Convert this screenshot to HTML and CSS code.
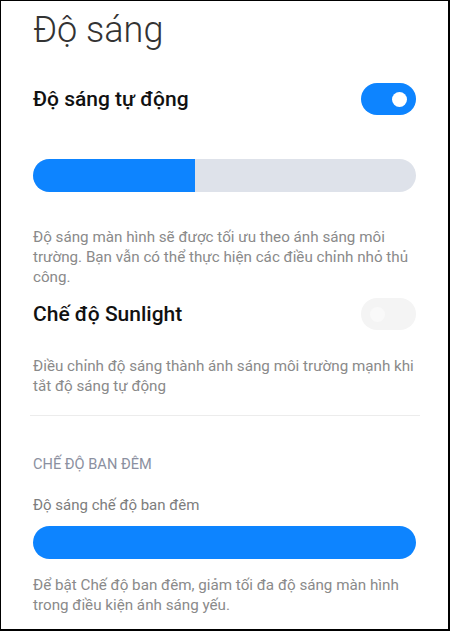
FILE: index.html
```html
<!DOCTYPE html>
<html lang="vi">
<head>
<meta charset="utf-8">
<link rel="stylesheet" href="styles.css">
</head>
<body>
<div class="frame">
  <h1 class="title">Độ sáng</h1>

  <div class="row row-auto">
    <span class="row-label">Độ sáng tự động</span>
    <span class="toggle on"><span class="knob"></span></span>
  </div>

  <div class="slider slider-auto"><div class="fill" style="width:42.3%"></div></div>

  <p class="desc desc-auto">Độ sáng màn hình sẽ được tối ưu theo ánh sáng môi trường. Bạn vẫn có thể thực hiện các điều chỉnh nhỏ thủ công.</p>

  <div class="row row-sun">
    <span class="row-label">Chế độ Sunlight</span>
    <span class="toggle off"><span class="knob"></span></span>
  </div>

  <p class="desc desc-sun">Điều chỉnh độ sáng thành ánh sáng môi trường mạnh khi tắt độ sáng tự động</p>

  <div class="divider"></div>

  <div class="section">CHẾ ĐỘ BAN ĐÊM</div>

  <div class="sub">Độ sáng chế độ ban đêm</div>

  <div class="slider slider-night"><div class="fill" style="width:100%"></div></div>

  <p class="desc desc-night">Để bật Chế độ ban đêm, giảm tối đa độ sáng màn hình trong điều kiện ánh sáng yếu.</p>
</div>
</body>
</html>
```

FILE: styles.css
```css
* { box-sizing: border-box; }
html, body { margin: 0; padding: 0; background: #fff; }
body { font-family: Roboto, "Noto Sans", sans-serif; }

.frame {
  width: 450px;
  height: 631px;
  border: 1px solid #000;
  border-right-width: 2px;
  border-bottom-width: 2px;
  padding: 0 32px 0 32px;
  overflow: hidden;
}

.title {
  margin: 7px 0 0 0;
  font-size: 36px;
  line-height: 44px;
  font-weight: 300;
  color: #333;
}

.row {
  display: flex;
  align-items: center;
  justify-content: space-between;
  height: 32px;
}
.row-auto { margin-top: 31px; }
.row-sun { margin-top: 11px; }

.row-label {
  font-size: 21px;
  font-weight: 500;
  color: #111;
}

.toggle {
  width: 55px;
  height: 32px;
  border-radius: 16px;
  display: flex;
  align-items: center;
  padding: 0 9px;
}
.toggle.on { background: #0d84ff; justify-content: flex-end; }
.toggle.off { background: #f4f4f4; justify-content: flex-start; }
.knob {
  width: 15px;
  height: 15px;
  border-radius: 50%;
  background: #fff;
}
.toggle.off .knob { background: #f9f9f9; }

.slider {
  height: 33px;
  border-radius: 17px;
  background: #dee2ea;
  overflow: hidden;
}
.slider-auto { margin-top: 44px; }
.slider-night { margin-top: 11px; }
.fill { height: 100%; background: #0d84ff; }

.desc {
  margin: 0;
  font-size: 15.2px;
  line-height: 20px;
  color: #8a8a8a;
}
.desc-auto { margin-top: 35px; }
.desc-sun { margin-top: 26px; }
.desc-night { margin-top: 16px; }

.divider {
  margin: 19px -4px 0 -3px;
  height: 1px;
  background: #ececec;
}

.section {
  margin-top: 38px;
  font-size: 14.6px;
  line-height: 20px;
  color: #8b90a0;
}

.sub {
  margin-top: 21px;
  font-size: 15px;
  line-height: 20px;
  color: #7d7d7d;
}
```
